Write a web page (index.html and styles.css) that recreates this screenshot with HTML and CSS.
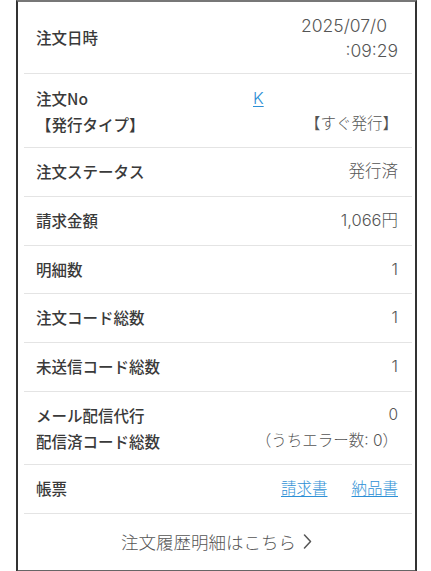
FILE: index.html
```html
<!DOCTYPE html>
<html lang="ja">
<head>
<meta charset="utf-8">
<title>注文詳細</title>
<link rel="stylesheet" href="styles.css">
</head>
<body>
<div class="card">
  <div class="row row-date">
    <div class="label">注文日時</div>
    <div class="value date">
      <span class="line first">2025/07/0</span>
      <span class="line">:09:29</span>
    </div>
  </div>
  <div class="row row-no">
    <div class="label">注文No</div>
    <div class="value no"><a class="link" href="#">K</a></div>
    <div class="label">【発行タイプ】</div>
    <div class="value right">【すぐ発行】</div>
  </div>
  <div class="row">
    <div class="label">注文ステータス</div>
    <div class="value">発行済</div>
  </div>
  <div class="row">
    <div class="label">請求金額</div>
    <div class="value">1,066円</div>
  </div>
  <div class="row">
    <div class="label">明細数</div>
    <div class="value">1</div>
  </div>
  <div class="row">
    <div class="label">注文コード総数</div>
    <div class="value">1</div>
  </div>
  <div class="row">
    <div class="label">未送信コード総数</div>
    <div class="value">1</div>
  </div>
  <div class="row row-mail">
    <div class="label">メール配信代行</div>
    <div class="value">0</div>
    <div class="label">配信済コード総数</div>
    <div class="value">（うちエラー数: 0）</div>
  </div>
  <div class="row">
    <div class="label">帳票</div>
    <div class="value links">
      <a class="link" href="#">請求書</a>
      <a class="link" href="#">納品書</a>
    </div>
  </div>
  <a class="footer" href="#">注文履歴明細はこちら<svg class="chev" width="9" height="15" viewBox="0 0 9 15"><path d="M1.5 1 L7.5 7.5 L1.5 14" fill="none" stroke="#555" stroke-width="1.5" stroke-linecap="round" stroke-linejoin="round"/></svg></a>
</div>
</body>
</html>
```
FILE: styles.css
```css
html, body {
  margin: 0;
  padding: 0;
  background: #ffffff;
}
body {
  font-family: "Noto Sans CJK JP", "Noto Sans", sans-serif;
  color: #333;
}
.card {
  margin-left: 16px;
  width: 401px;
  box-sizing: border-box;
  border-left: 2px solid #333;
  border-right: 2px solid #333;
  border-top: 2px solid #777;
  border-bottom: 3px solid #666;
  background: #fff;
}
.row {
  margin: 0 3px 0 6px;
  padding: 12px 14px 12px 12px;
  border-bottom: 1px solid #e4e4e4;
  display: flex;
  justify-content: space-between;
  align-items: center;
  font-size: 15.5px;
  line-height: 23.75px;
}
.label {
  font-weight: 500;
  color: #3a3a3a;
  white-space: nowrap;
}
.value {
  font-family: Inter, "Noto Sans CJK JP", sans-serif;
  font-weight: 300;
  color: #555;
  text-align: right;
  font-size: 16.5px;
}
.row-date {
  padding-top: 10.5px;
  padding-bottom: 10.5px;
}
.date {
  display: flex;
  flex-direction: column;
  align-items: flex-end;
  line-height: 25px;
  font-size: 17.5px;
}
.date .first {
  margin-right: 11px;
}
.row-no {
  display: grid;
  grid-template-columns: 217px 1fr;
  padding-top: 10.5px;
  padding-bottom: 10.5px;
  line-height: 26px;
}
.row-no .no {
  text-align: left;
}
.row-no .right {
  text-align: right;
  font-size: 15.5px;
}
.row-mail {
  display: grid;
  grid-template-columns: auto 1fr;
  padding-top: 10px;
  padding-bottom: 10px;
  line-height: 26px;
}
.row-mail .value {
  font-size: 15.5px;
}
.link {
  color: #2d8fd5;
  text-decoration: underline;
  text-underline-offset: 2px;
}
.links {
  display: flex;
  gap: 24px;
  font-size: 15.5px;
}
.footer {
  display: flex;
  justify-content: center;
  align-items: center;
  gap: 7px;
  height: 56px;
  color: #555;
  font-size: 17.5px;
  font-weight: 300;
  text-decoration: none;
}
.chev {
  display: block;
}
```
